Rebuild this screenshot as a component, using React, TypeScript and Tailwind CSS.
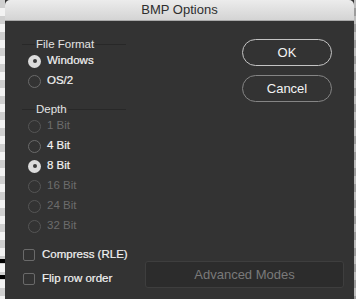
import React from 'react'

const font = "font-['Liberation_Sans',Arial,sans-serif]"

const GroupHeader = ({ label }: { label: string }) => (
  <div className="flex items-center h-[14px] w-[104px]">
    <div className="w-[13px] h-px bg-[#282828]" />
    <span className="px-[1px] text-[11.5px] leading-[14px] text-[#e4e4e4] whitespace-nowrap">{label}</span>
    <div className="flex-1 h-px bg-[#282828]" />
  </div>
)

const Radio = ({ label, checked, disabled }: { label: string; checked?: boolean; disabled?: boolean }) => (
  <div className="flex items-center h-[20px]">
    <div
      className={
        checked
          ? 'ml-[6px] w-[13px] h-[13px] rounded-full bg-[#dcdcdc] flex items-center justify-center'
          : disabled
          ? 'ml-[6px] w-[13px] h-[13px] rounded-full border border-[#555555]'
          : 'ml-[6px] w-[13px] h-[13px] rounded-full border border-[#6a6a6a]'
      }
    >
      {checked && <div className="w-[4px] h-[4px] rounded-full bg-[#3a3a3a]" />}
    </div>
    <span
      className={
        disabled
          ? 'ml-[6px] text-[11.5px] text-[#6c6c6c] whitespace-nowrap'
          : 'ml-[6px] text-[11.5px] text-[#f2f2f2] [-webkit-text-stroke:0.2px_#f2f2f2] whitespace-nowrap'
      }
    >
      {label}
    </span>
  </div>
)

const Checkbox = ({ label }: { label: string }) => (
  <div className="flex items-center h-[24px]">
    <div className="ml-[1px] w-[12px] h-[12px] rounded-[2px] border border-[#6a6a6a]" />
    <span className="ml-[7px] text-[11.5px] text-[#f2f2f2] [-webkit-text-stroke:0.2px_#f2f2f2] whitespace-nowrap">{label}</span>
  </div>
)

export default function App() {
  return (
    <div className={`flex w-[356px] h-[299px] overflow-hidden bg-[#333333] ${font}`}>
      {/* desktop strip left */}
      <div className="relative w-[5px] h-full bg-[repeating-linear-gradient(180deg,#cfcfcf_0_8px,#f2f2f2_8px_16px)]">
        <div className="absolute left-0 top-[259px] w-[5px] h-[4px] bg-black" />
        <div className="absolute left-0 top-[275px] w-[5px] h-[4px] bg-black" />
      </div>

      {/* window */}
      <div className="flex flex-col w-[349px] h-full">
        <div className="h-[21px] rounded-t-[5px] bg-gradient-to-b from-[#ececec] to-[#d4d4d4] border-b border-[#a9a9a9] flex items-center justify-center">
          <span className="text-[13px] text-[#2e2e2e]">BMP Options</span>
        </div>

        <div className="flex-1 flex flex-col bg-[#333333] pl-[17px] pt-[16px]">
          <div className="flex justify-between">
            <div className="flex flex-col">
              <GroupHeader label="File Format" />
              <Radio label="Windows" checked />
              <Radio label="OS/2" />
              <div className="h-[11px]" />
              <GroupHeader label="Depth" />
              <Radio label="1 Bit" disabled />
              <Radio label="4 Bit" />
              <Radio label="8 Bit" checked />
              <Radio label="16 Bit" disabled />
              <Radio label="24 Bit" disabled />
              <Radio label="32 Bit" disabled />
            </div>

            <div className="flex flex-col gap-[9px] pt-[2px] pr-[22px]">
              <button className="w-[90px] h-[27px] rounded-full border-[1.5px] border-[#c4c4c4] text-[13px] text-[#f4f4f4]">
                OK
              </button>
              <button className="w-[90px] h-[27px] rounded-full border-[1.5px] border-[#858585] text-[13px] text-[#f4f4f4]">
                Cancel
              </button>
            </div>
          </div>

          <div className="flex mt-[7px]">
            <div className="flex flex-col w-[123px]">
              <Checkbox label="Compress (RLE)" />
              <Checkbox label="Flip row order" />
            </div>
            <button className="mt-[18px] w-[199px] h-[27px] rounded-[3px] bg-[#2c2c2c] border border-[#3e3e3e] text-[13px] text-[#7a7a7a]">
              Advanced Modes
            </button>
          </div>
        </div>
      </div>

      {/* desktop strip right */}
      <div className="w-[2px] h-full bg-[repeating-linear-gradient(180deg,#bdbdbd_0_8px,#9c9c9c_8px_16px)]" />
    </div>
  )
}
